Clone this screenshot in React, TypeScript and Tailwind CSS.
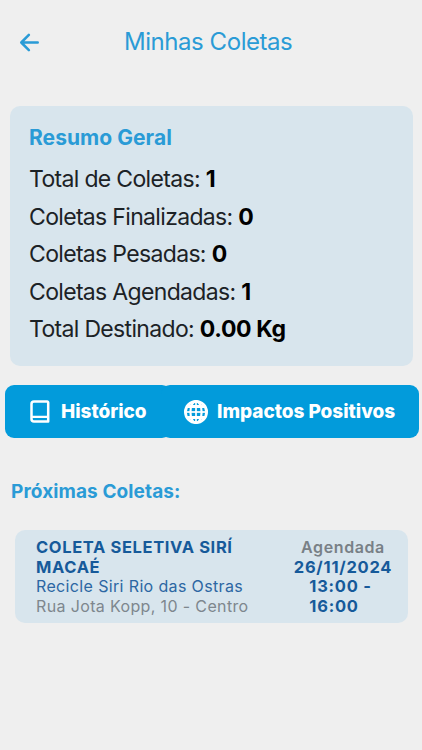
import React from 'react';
import { IoArrowBack } from 'react-icons/io5';

const summary = [
  { label: 'Total de Coletas', value: '1' },
  { label: 'Coletas Finalizadas', value: '0' },
  { label: 'Coletas Pesadas', value: '0' },
  { label: 'Coletas Agendadas', value: '1' },
  { label: 'Total Destinado', value: '0.00 Kg' },
];

const BookIcon: React.FC = () => (
  <svg width="20" height="24" viewBox="0 0 20 24" fill="none" stroke="white" strokeLinejoin="round" strokeLinecap="round">
    <path d="M4 1.6H17.2A1 1 0 0 1 18.2 2.6V21.6H4A2.5 2.5 0 0 1 1.5 19.1V4.1A2.5 2.5 0 0 1 4 1.6Z" strokeWidth="2.5" />
    <path d="M2.5 16.8H17.5" strokeWidth="2.3" />
  </svg>
);

const GlobeIcon: React.FC = () => (
  <svg width="24" height="24" viewBox="0 0 24 24" fill="none" stroke="white">
    <circle cx="12" cy="12" r="10.6" strokeWidth="2.8" />
    <ellipse cx="12" cy="12" rx="5.6" ry="10.8" strokeWidth="2.2" />
    <path d="M12 1V23" strokeWidth="1.7" />
    <path d="M1 12H23" strokeWidth="1.7" />
    <path d="M3 6.5H21M3 17.5H21" strokeWidth="3" />
  </svg>
);

export default function App() {
  return (
    <div className="h-[750px] w-[422px] overflow-hidden bg-[#efefef] font-['Inter',sans-serif]">
      {/* Header */}
      <header className="flex h-[84px] items-center pl-[16px]">
        <IoArrowBack size={27} className="text-[#2a9bd6]" />
        <h1 className="ml-[81px] text-[24px] tracking-[-0.45px] whitespace-nowrap text-[#2a9bd6]">Minhas Coletas</h1>
      </header>

      {/* Summary */}
      <section className="mt-[22px] mr-[9px] ml-[10px] h-[260px] rounded-[10px] bg-[#d8e5ed] pt-[17px] pl-[19px]">
        <h2 className="text-[21px] leading-[30px] font-bold tracking-[0.05px] text-[#2a9bd6]">Resumo Geral</h2>
        <div className="mt-[7px]">
          {summary.map((item) => (
            <p key={item.label} className="h-[37.5px] text-[23px] leading-[38px] tracking-[-0.67px] whitespace-nowrap text-[#1c2226]">
              {item.label}: <strong className="font-bold tracking-[-0.35px] text-black">{item.value}</strong>
            </p>
          ))}
        </div>
      </section>

      {/* Actions */}
      <div className="mt-[19px] ml-[5px] flex h-[53px] w-[414px] text-[19px] font-extrabold tracking-[-0.03px] text-white">
        <button className="flex w-[166px] items-center rounded-[9px] bg-[#029bdb] pl-[25px]">
          <BookIcon />
          <span className="ml-[11px] pt-[2px]">Histórico</span>
        </button>
        <button className="-ml-[10px] flex flex-1 items-center rounded-[9px] bg-[#029bdb] pl-[23px]">
          <GlobeIcon />
          <span className="ml-[9px] pt-[2px] whitespace-nowrap">Impactos Positivos</span>
        </button>
      </div>

      {/* Upcoming */}
      <h2 className="mt-[40px] ml-[11px] text-[19px] leading-[28px] font-bold tracking-[0.1px] text-[#2a9bd6]">Próximas Coletas:</h2>
      <article className="mt-[24px] ml-[15px] flex h-[93px] w-[393px] rounded-[10px] bg-[#d8e5ed] pt-[8px] text-[16px] leading-[19.6px] whitespace-nowrap">
        <div className="w-[263px] pl-[21px]">
          <p className="text-[16.5px] font-bold tracking-[0.63px] text-[#165a9a]">COLETA SELETIVA SIRÍ<br />MACAÉ</p>
          <p className="tracking-[0.36px] text-[#2c67a3]">Recicle Siri Rio das Ostras</p>
          <p className="tracking-[0.36px] text-[#7e878d]">Rua Jota Kopp, 10 - Centro</p>
        </div>
        <div className="flex w-[130px] flex-col items-center">
          <p className="font-semibold tracking-[0.6px] text-[#788086]">Agendada</p>
          <p className="text-[16.5px] font-bold tracking-[0.75px] text-[#165a9a]">26/11/2024</p>
          <p className="mr-[5px] text-[16.5px] font-bold tracking-[0.75px] text-[#165a9a]">13:00 -<br />16:00</p>
        </div>
      </article>
    </div>
  );
}
